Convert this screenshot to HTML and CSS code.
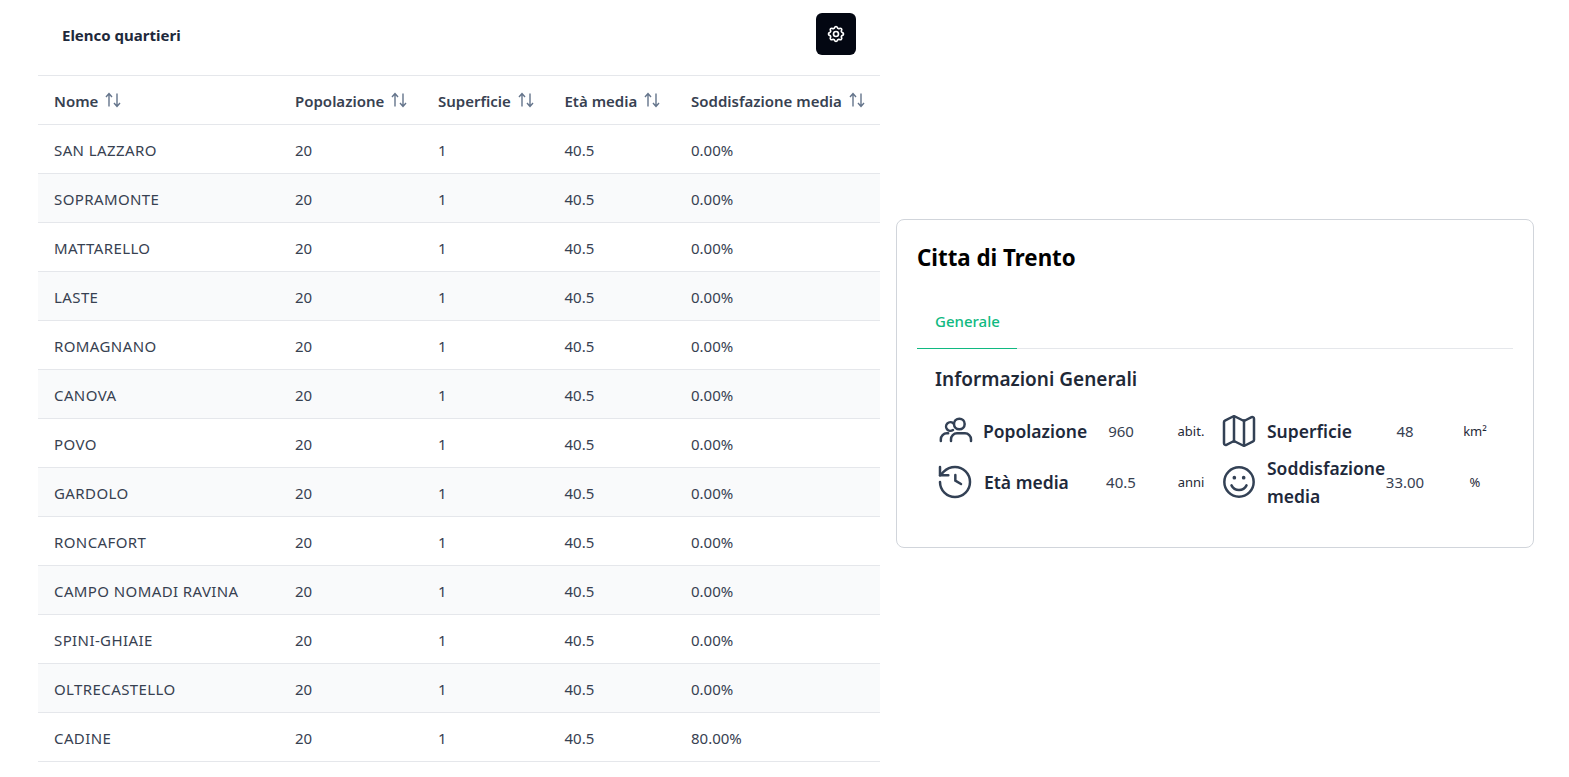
FILE: index.html
```html
<!DOCTYPE html>
<html lang="it">
<head>
    <meta charset="UTF-8">
    <meta name="viewport" content="width=device-width, initial-scale=1.0">
    <title>Elenco quartieri</title>
    <link rel="stylesheet" href="styles.css">
</head>
<body>
    <main class="page">
        <section class="districts">
            <div class="districts-head">
                <h2 class="districts-title">Elenco quartieri</h2>
                <button class="settings-btn" type="button" aria-label="Impostazioni">
                    <svg viewBox="0 0 24 24" width="20" height="20" fill="none" stroke="currentColor" stroke-width="2" stroke-linecap="round" stroke-linejoin="round">
                        <path d="M10.325 4.317c.426-1.756 2.924-1.756 3.35 0a1.724 1.724 0 002.573 1.066c1.543-.94 3.31.826 2.37 2.37a1.724 1.724 0 001.065 2.572c1.756.426 1.756 2.924 0 3.35a1.724 1.724 0 00-1.066 2.573c.94 1.543-.826 3.31-2.37 2.37a1.724 1.724 0 00-2.572 1.065c-.426 1.756-2.924 1.756-3.35 0a1.724 1.724 0 00-2.573-1.066c-1.543.94-3.31-.826-2.37-2.37a1.724 1.724 0 00-1.065-2.572c-1.756-.426-1.756-2.924 0-3.35a1.724 1.724 0 001.066-2.573c-.94-1.543.826-3.31 2.37-2.37.996.608 2.296.07 2.572-1.065z"/>
                        <path d="M15 12a3 3 0 11-6 0 3 3 0 016 0z"/>
                    </svg>
                </button>
            </div>
            <table class="districts-table">
                <thead>
                    <tr>
                        <th class="col-name">Nome <svg class="sort-icon" viewBox="0 0 16 16"><path d="M4 14.5V1.5M1 5l3-3.5L7 5M12 1.5v13M9 11l3 3.5 3-3.5"/></svg></th>
                        <th class="col-pop">Popolazione <svg class="sort-icon" viewBox="0 0 16 16"><path d="M4 14.5V1.5M1 5l3-3.5L7 5M12 1.5v13M9 11l3 3.5 3-3.5"/></svg></th>
                        <th class="col-area">Superficie <svg class="sort-icon" viewBox="0 0 16 16"><path d="M4 14.5V1.5M1 5l3-3.5L7 5M12 1.5v13M9 11l3 3.5 3-3.5"/></svg></th>
                        <th class="col-age">Età media <svg class="sort-icon" viewBox="0 0 16 16"><path d="M4 14.5V1.5M1 5l3-3.5L7 5M12 1.5v13M9 11l3 3.5 3-3.5"/></svg></th>
                        <th class="col-rate">Soddisfazione media <svg class="sort-icon" viewBox="0 0 16 16"><path d="M4 14.5V1.5M1 5l3-3.5L7 5M12 1.5v13M9 11l3 3.5 3-3.5"/></svg></th>
                    </tr>
                </thead>
                <tbody>
                    <tr><td>SAN LAZZARO</td><td>20</td><td>1</td><td>40.5</td><td>0.00%</td></tr>
                    <tr><td>SOPRAMONTE</td><td>20</td><td>1</td><td>40.5</td><td>0.00%</td></tr>
                    <tr><td>MATTARELLO</td><td>20</td><td>1</td><td>40.5</td><td>0.00%</td></tr>
                    <tr><td>LASTE</td><td>20</td><td>1</td><td>40.5</td><td>0.00%</td></tr>
                    <tr><td>ROMAGNANO</td><td>20</td><td>1</td><td>40.5</td><td>0.00%</td></tr>
                    <tr><td>CANOVA</td><td>20</td><td>1</td><td>40.5</td><td>0.00%</td></tr>
                    <tr><td>POVO</td><td>20</td><td>1</td><td>40.5</td><td>0.00%</td></tr>
                    <tr><td>GARDOLO</td><td>20</td><td>1</td><td>40.5</td><td>0.00%</td></tr>
                    <tr><td>RONCAFORT</td><td>20</td><td>1</td><td>40.5</td><td>0.00%</td></tr>
                    <tr><td>CAMPO NOMADI RAVINA</td><td>20</td><td>1</td><td>40.5</td><td>0.00%</td></tr>
                    <tr><td>SPINI-GHIAIE</td><td>20</td><td>1</td><td>40.5</td><td>0.00%</td></tr>
                    <tr><td>OLTRECASTELLO</td><td>20</td><td>1</td><td>40.5</td><td>0.00%</td></tr>
                    <tr><td>CADINE</td><td>20</td><td>1</td><td>40.5</td><td>80.00%</td></tr>
                </tbody>
            </table>
        </section>

        <section class="city-card">
            <h1 class="city-title">Citta di Trento</h1>
            <div class="tabs">
                <div class="tab active">Generale</div>
            </div>
            <div class="tab-panel">
                <h3 class="panel-title">Informazioni Generali</h3>
                <div class="stats">
                    <div class="stat">
                        <svg class="stat-icon" viewBox="0 0 24 24">
                            <circle cx="14.6" cy="7.8" r="3.2"/>
                            <path d="M9.6 18v-1a3.6 3.6 0 0 1 3.6-3.6h4.8a3.6 3.6 0 0 1 3.6 3.6v1"/>
                            <path d="M11 7.4a2.6 2.6 0 1 0-.2 4"/>
                            <path d="M3.5 18v-1a3.6 3.6 0 0 1 3.6-3.6h.8"/>
                        </svg>
                        <span class="stat-label">Popolazione</span>
                        <span class="stat-value">960</span>
                        <span class="stat-unit">abit.</span>
                    </div>
                    <div class="stat">
                        <svg class="stat-icon" viewBox="0 0 24 24">
                            <path d="M14.106 5.553a2 2 0 0 0 1.788 0l3.659-1.83A1 1 0 0 1 21 4.619v12.764a1 1 0 0 1-.553.894l-4.553 2.277a2 2 0 0 1-1.788 0l-4.212-2.106a2 2 0 0 0-1.788 0l-3.659 1.83A1 1 0 0 1 3 19.381V6.618a1 1 0 0 1 .553-.894l4.553-2.277a2 2 0 0 1 1.788 0z"/>
                            <path d="M15 5.764v15"/>
                            <path d="M9 3.236v15"/>
                        </svg>
                        <span class="stat-label">Superficie</span>
                        <span class="stat-value">48</span>
                        <span class="stat-unit">km²</span>
                    </div>
                    <div class="stat">
                        <svg class="stat-icon" viewBox="0 0 24 24">
                            <path d="M3 12a9 9 0 1 0 9-9 9.75 9.75 0 0 0-6.74 2.74L3 8"/>
                            <path d="M3 3v5h5"/>
                            <path d="M12.2 7.8v3.4l3.4 2"/>
                        </svg>
                        <span class="stat-label label-age">Età media</span>
                        <span class="stat-value">40.5</span>
                        <span class="stat-unit">anni</span>
                    </div>
                    <div class="stat">
                        <svg class="stat-icon" viewBox="0 0 24 24">
                            <circle cx="12" cy="12" r="8.8"/>
                            <path d="M7.5 14a5 5 0 0 0 9 0"/>
                            <path class="eyes" d="M9.2 9.4h.01M14.8 9.4h.01"/>
                        </svg>
                        <span class="stat-label">Soddisfazione media</span>
                        <span class="stat-value">33.00</span>
                        <span class="stat-unit">%</span>
                    </div>
                </div>
            </div>
        </section>
    </main>
</body>
</html>
```

FILE: styles.css
```css
* {
    box-sizing: border-box;
}

body {
    margin: 0;
    background: #fff;
    color: #374151;
    font-family: "Noto Sans", "Open Sans", sans-serif;
    font-size: 15px;
}

.page {
    display: grid;
    grid-template-columns: 842px 638px;
    column-gap: 16px;
    align-items: center;
    padding-left: 38px;
}

.districts {
    padding-bottom: 4px;
}

.districts-head {
    display: flex;
    align-items: center;
    justify-content: space-between;
    height: 75px;
    padding: 13px 24px 20px;
}

.districts-title {
    margin: 2px 0 0;
    font-size: 15px;
    font-weight: 700;
    color: #1e293b;
}

.settings-btn {
    display: flex;
    align-items: center;
    justify-content: center;
    width: 40px;
    height: 42px;
    border: none;
    border-radius: 6px;
    background: #030712;
    color: #fff;
    cursor: pointer;
}

.districts-table {
    width: 100%;
    border-collapse: collapse;
    table-layout: fixed;
    border-top: 1px solid #e5e7eb;
}

.districts-table th,
.districts-table td {
    height: 49px;
    padding: 2px 0 0 16px;
    border-bottom: 1px solid #e5e7eb;
    text-align: left;
    white-space: nowrap;
}

.districts-table th {
    font-weight: 600;
    color: #374151;
}

.districts-table tbody td:first-child {
    letter-spacing: .4px;
}

.districts-table tbody tr:nth-child(even) {
    background: #f9fafb;
}

.col-name { width: 241px; }
.col-pop { width: 143px; }
.col-area { width: 126.5px; }
.col-age { width: 126.5px; }
.col-rate { width: 205px; }

.sort-icon {
    width: 16px;
    height: 16px;
    margin-left: 3px;
    vertical-align: -1px;
    fill: none;
    stroke: #64748b;
    stroke-width: 1.4;
}

.city-card {
    height: 329px;
    padding: 20px;
    border: 1px solid #d1d5db;
    border-radius: 8px;
    background: #fff;
}

.city-title {
    margin: 0;
    font-size: 22.3px;
    line-height: 36px;
    font-weight: 700;
    color: #000;
}

.tabs {
    display: flex;
    margin-top: 18px;
    border-bottom: 1px solid #e5e7eb;
}

.tab {
    width: 100px;
    margin-bottom: -1px;
    padding: 17px 18px;
    line-height: 20px;
    font-weight: 500;
    color: #10b981;
    border-bottom: 1px solid #10b981;
}

.tab-panel {
    padding: 16px 18px 0;
}

.panel-title {
    margin: 0 0 18px;
    font-size: 19px;
    line-height: 28px;
    font-weight: 600;
    color: #1f2937;
}

.stats {
    display: grid;
    grid-template-columns: repeat(2, 284px);
    row-gap: 3px;
}

.stat {
    display: grid;
    grid-template-columns: 48px 118px 40px 1fr;
    align-items: center;
}

.stat-icon {
    width: 40px;
    height: 40px;
    fill: none;
    stroke: #334155;
    stroke-width: 1.5;
    stroke-linecap: round;
    stroke-linejoin: round;
}

.stat-icon .eyes {
    stroke-width: 2.2;
}

.stat-label {
    font-size: 17.5px;
    line-height: 28px;
    font-weight: 600;
    color: #1e293b;
}

.label-age {
    margin-left: 1px;
}

.stat-value {
    text-align: center;
    white-space: nowrap;
}

.stat-unit {
    padding-left: 22px;
    font-size: 13px;
    text-align: center;
    color: #1f2937;
}
```
